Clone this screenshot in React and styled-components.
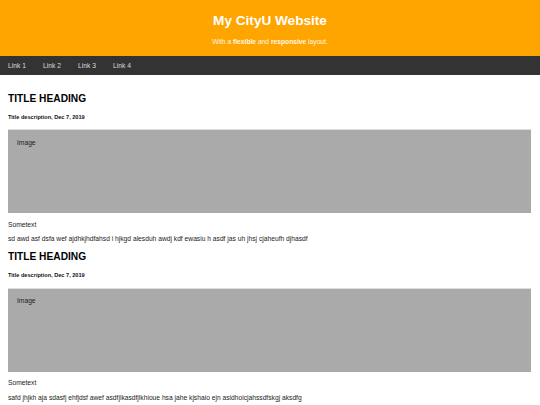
import React from "react";
import styled, { createGlobalStyle } from "styled-components";

const GlobalStyle = createGlobalStyle`
  body {
    margin: 0;
    background: #fff;
    font-family: "Liberation Sans", Arial, sans-serif;
  }
`

const Header = styled.header`
  background: #ffa500;
  color: #fff;
  text-align: center;
  padding: 11.5px 0 10.5px;
`

const SiteTitle = styled.h1`
  margin: 0;
  font-size: 13.6px;
  line-height: 17px;
  font-weight: bold;
`

const Tagline = styled.p`
  margin: 8px 0 0;
  font-size: 6.7px;
  line-height: 9px;
  color: #fff6e6;
`

const Nav = styled.nav`
  display: flex;
  background: #333;
  height: 19px;
  align-items: center;
`

const NavLink = styled.a`
  display: block;
  flex: 0 0 35px;
  box-sizing: border-box;
  padding-left: 8px;
  white-space: nowrap;
  color: #ddd;
  font-size: 6.7px;
  line-height: 19px;
  text-decoration: none;
`

const Main = styled.main`
  padding: 16.5px 9px 0 8px;
`

const Card = styled.section`
  display: flex;
  flex-direction: column;
  margin-bottom: 7px;
`

const Heading = styled.h2`
  margin: 0;
  font-size: 10.2px;
  line-height: 13px;
  font-weight: bold;
  color: #000;
`

const Meta = styled.h5`
  margin: 9px 0 0;
  font-size: 5.6px;
  line-height: 7px;
  font-weight: bold;
  color: #111;
`

const ImageBox = styled.div`
  margin-top: 8.5px;
  height: 84px;
  background: #aaa;
  border-top: 1px solid #ddd;
  box-sizing: border-box;
  padding: 7.5px 9px;
  font-size: 6.7px;
  line-height: 9px;
  color: #222;
`

const Text = styled.p`
  margin: ${(p) => p.gap}px 0 0;
  font-size: 6.7px;
  line-height: 9px;
  color: #222;
`

const posts = [
  "sd awd asf dsfa wef ajdhkjhdfahsd i hjkgd alesduh awdj kdf ewasiu h asdf jas uh jhsj cjaheufh djhasdf",
  "safd jhjkh aja sdasfj ehfjdsf awef asdfjlkasdfjlkhioue hsa jahe kjshaio ejn asidhoicjahssdfskgj aksdfg",
];

export default function App() {
  return (
    <>
      <GlobalStyle />
      <Header>
        <SiteTitle>My CityU Website</SiteTitle>
        <Tagline>
          With a <b>flexible</b> and <b>responsive</b> layout.
        </Tagline>
      </Header>
      <Nav>
        {["Link 1", "Link 2", "Link 3", "Link 4"].map((l) => (
          <NavLink key={l} href="#">{l}</NavLink>
        ))}
      </Nav>
      <Main>
        {posts.map((body, i) => (
          <Card key={i}>
            <Heading>TITLE HEADING</Heading>
            <Meta>Title description, Dec 7, 2019</Meta>
            <ImageBox>Image</ImageBox>
            <Text gap={6.5}>Sometext</Text>
            <Text gap={5.5}>{body}</Text>
          </Card>
        ))}
      </Main>
    </>
  );
}
